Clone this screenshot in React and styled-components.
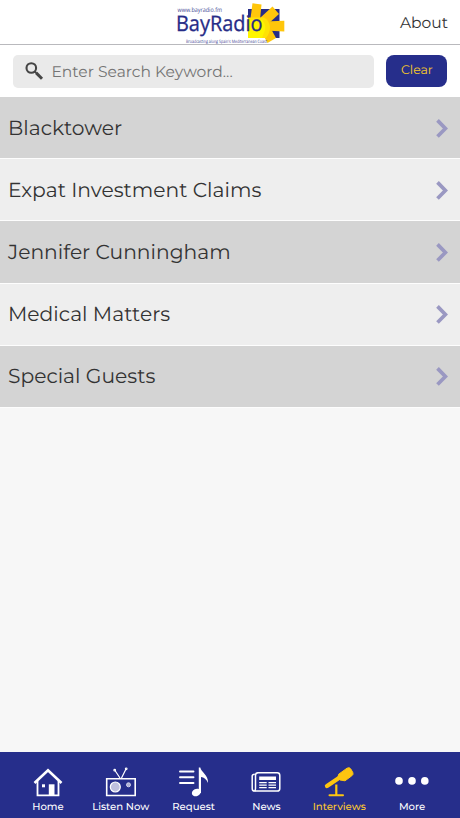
import React from 'react'
import { useState } from 'react'
import styled, { createGlobalStyle } from 'styled-components'

const interviews = [
    "Blacktower",
    "Expat Investment Claims",
    "Jennifer Cunningham",
    "Medical Matters",
    "Special Guests",
]

const tabs = [
    { name: "Home", icon: <HomeIcon/> },
    { name: "Listen Now", icon: <RadioIcon/> },
    { name: "Request", icon: <RequestIcon/> },
    { name: "News", icon: <NewsIcon/> },
    { name: "Interviews", icon: <MicIcon/> },
    { name: "More", icon: <MoreIcon/> },
]

export default function App() {

    const [activeTab,setActiveTab] = useState("Interviews")
    const [keyword,setKeyword] = useState("")

    const shown = interviews.filter((name)=>name.toLowerCase().includes(keyword.toLowerCase()))

  return (
    <>
        <GlobalStyle/>
        <Root>
            <Header>
                <Logo/>
                <About>About</About>
            </Header>
            <SearchBar>
                <SearchBox>
                    <SearchIcon/>
                    <SearchInput placeholder="Enter Search Keyword..." value={keyword} onChange={(e)=>{setKeyword(e.target.value)}}/>
                </SearchBox>
                <ClearButton onClick={()=>{setKeyword("")}}>Clear</ClearButton>
            </SearchBar>
            <List>
                {shown.map((name)=>(
                    <Row key={name}>
                        <RowName>{name}</RowName>
                        <Chevron/>
                    </Row>
                ))}
            </List>
            <TabBar>
                {tabs.map((tab)=>(
                    <Tab key={tab.name} $active={activeTab==tab.name} onClick={()=>{setActiveTab(tab.name)}}>
                        {tab.icon}
                        <span>{tab.name}</span>
                    </Tab>
                ))}
            </TabBar>
        </Root>
    </>
  )
}

function Logo() {
  return (
    <LogoSvg width="112" height="44" viewBox="175 0 112 44">
        <rect x="248" y="9" width="31.5" height="29" fill="#262c87"/>
        <path d="M252.500 3.200l9 1.300-1.500 15-9.500-1z" fill="#ffc60b"/>
        <path d="M272.500 6.500l6.500 7.500-11 10-8-6z" fill="#ffc60b"/>
        <path d="M264 21.500l20.300-.8v10.800l-20-1z" fill="#ffc60b"/>
        <path d="M270 27l6 11-8.500 5-7-13z" fill="#ffc60b"/>
        <path d="M248 17.500h16q5.500 3 6 9.500 0 6-4 11h-18z" fill="#ffe205"/>
        <path d="M248 20h14q4 4 3 10l-3 8h-14z" fill="#fff500"/>
        <text x="177.500" y="12" fontSize="6.300" textLength="44.500" lengthAdjust="spacingAndGlyphs" fill="#444a94">www.bayradio.fm</text>
        <text x="176" y="31" fontSize="21.500" fontWeight="500" textLength="86.500" lengthAdjust="spacingAndGlyphs" fill="#262c87" stroke="#262c87" strokeWidth=".3">BayRadio</text>
        <text x="186" y="43" fontSize="4.500" textLength="81" lengthAdjust="spacingAndGlyphs" fill="#3c4292">Broadcasting along Spain's Mediterranean Coast</text>
    </LogoSvg>
  )
}

function SearchIcon() {
  return (
    <svg width="19" height="19" viewBox="0 0 19 19" fill="none" stroke="#454545">
        <circle cx="6.300" cy="6" r="4.800" strokeWidth="2.100"/>
        <path d="M9.800 9.500l1.600 1.600" strokeWidth="2"/>
        <path d="M11.200 10.900l5.800 5.800" strokeWidth="3"/>
    </svg>
  )
}

function Chevron() {
  return (
    <svg width="14" height="20" viewBox="0 0 14 20" fill="none" stroke="#9a98c2" strokeWidth="3.700">
        <path d="M1.500 2.400L9.400 10.500l-7.900 8"/>
    </svg>
  )
}

function HomeIcon() {
  return (
    <svg width="36" height="34" viewBox="0 0 36 34" fill="none" stroke="#fff" strokeWidth="1.800">
        <path d="M4.500 18L18 5.300 31.500 18" strokeWidth="2.600"/>
        <path d="M7.500 16v14.300h21V16"/>
        <path d="M18.800 19.300h5.700v11h-5.700z" fill="#fff" stroke="none"/>
        <path d="M12 19.300h3v3h-3z" fill="#fff" stroke="none"/>
    </svg>
  )
}

function RadioIcon() {
  return (
    <svg width="36" height="34" viewBox="0 0 36 34" fill="none" stroke="#fff" strokeWidth="1.600">
        <path d="M3.700 13.800h28.500v16.700H3.700z"/>
        <path d="M17 13L12 5.500M18.500 13L23 4" strokeWidth="1.200"/>
        <circle cx="11.700" cy="5.200" r=".6"/>
        <circle cx="23.200" cy="3.800" r=".6"/>
        <circle cx="12.300" cy="22" r="5" fill="#bfc0df" strokeWidth="1.200"/>
        <circle cx="25.500" cy="19.800" r="2" fill="#aeb0d5" stroke="#d2d3ea" strokeWidth="1"/>
    </svg>
  )
}

function RequestIcon() {
  return (
    <svg width="36" height="34" viewBox="0 0 36 34" fill="none" stroke="#fff" strokeWidth="1.900">
        <path d="M4 6.500h13.500M4 12.200h13.500M4 18h13.500" strokeLinecap="round"/>
        <ellipse cx="20.300" cy="27.500" rx="4.600" ry="3.600" transform="rotate(-25 20.300 27.500)" fill="#fff" stroke="none"/>
        <path d="M22.800 2.500h1.500c.8 5 8.200 7 7.700 15.500-1.500-3.800-4-5.500-7-6v16h-2.200z" fill="#fff" stroke="none"/>
    </svg>
  )
}

function NewsIcon() {
  return (
    <svg width="36" height="34" viewBox="0 0 36 34" fill="none" stroke="#fff" strokeWidth="1.500">
        <path d="M9.500 7.800h19.700q2.600 0 2.600 2.600v13q0 2.600-2.600 2.600H6.600q-2.400 0-2.400-2.600V11q0-1.800 2.600-1.800"/>
        <path d="M10 7.800q-2.500 0-2.500 2.600v13q0 2-1 2.600"/>
        <path d="M11.200 11.500h16.800v3.500H11.200z" fill="#fff" stroke="none"/>
        <path d="M11.200 17.700h7.500M20.500 17.700H28M11.200 20.200h7.500M20.500 20.200H28M11.200 22.700h7.500M20.500 22.700H28" strokeWidth="1.200"/>
    </svg>
  )
}

function MicIcon() {
  return (
    <svg width="36" height="34" viewBox="0 0 36 34" fill="none" stroke="#fdc510">
        <path d="M6 21L19 12.300" strokeWidth="4.300" strokeLinecap="round"/>
        <path d="M17.700 9.200l8.300-6q2.500-1.400 3.800.8l2 3.500q.9 2-1 3.300L24 15.800l-5-.8-2-3z" fill="#fdc510" strokeWidth="1" strokeLinejoin="round"/>
        <path d="M15.300 19.500v10.500" strokeWidth="2.200"/>
        <path d="M8.500 30.300h13.500" strokeWidth="2" strokeLinecap="round"/>
    </svg>
  )
}

function MoreIcon() {
  return (
    <svg width="36" height="34" viewBox="0 0 36 34" fill="#fff">
        <circle cx="5" cy="15.900" r="3.800"/>
        <circle cx="18" cy="15.900" r="3.800"/>
        <circle cx="30.800" cy="15.900" r="3.800"/>
    </svg>
  )
}

const GlobalStyle = createGlobalStyle`
body{
    margin: 0;
    font-family: Montserrat, Inter, sans-serif;
    text-rendering: geometricPrecision;
}
*{
    box-sizing: border-box;
}
button, input{
    font-family: inherit;
    text-rendering: inherit;
    border: none;
    padding: 0;
}
`

const Root = styled.section`
height: 818px;
display: flex;
flex-direction: column;
background-color: #f7f7f7;
color: #333;
overflow: hidden;
`

const Header = styled.header`
height: 45px;
flex-shrink: 0;
display: grid;
grid-template-columns: 175px 112px 1fr;
background-color: white;
border-bottom: 1.500px solid #b9b9bd;
`

const LogoSvg = styled.svg`
grid-column: 2;
font-family: "Open Sans", "Noto Sans", sans-serif;
`

const About = styled.span`
justify-self: end;
padding: 13px 12px 0 0;
font-size: 15.500px;
line-height: 20px;
`

const SearchBar = styled.div`
height: 52px;
flex-shrink: 0;
display: flex;
gap: 12px;
padding: 9.700px 12.600px 0 13.400px;
background-color: white;
`

const SearchBox = styled.label`
flex: 1;
height: 33.300px;
display: flex;
align-items: center;
gap: 7px;
padding-left: 12.100px;
border-radius: 5px;
background-color: #eaeaea;
`

const SearchInput = styled.input`
flex: 1;
min-width: 0;
height: 33px;
font-size: 15.500px;
background-color: transparent;
outline: none;

&::placeholder{
    color: #757575;
}
`

const ClearButton = styled.button`
width: 61px;
height: 32.300px;
border-radius: 8px;
font-size: 12.500px;
background-color: #262e8b;
color: #f5c829;
`

const List = styled.div`
flex: 1;
`

const Row = styled.div`
height: 62.200px;
display: flex;
align-items: center;
justify-content: space-between;
padding: 0 10px 0 8px;
border-bottom: 1.200px solid #fdfdfd;
background-color: #eee;

&:nth-child(odd){
    background-color: #d4d4d4;
}
`

const RowName = styled.span`
padding-top: 2px;
font-size: 20.250px;
line-height: 28px;
`

const TabBar = styled.nav`
height: 66px;
flex-shrink: 0;
display: flex;
padding: 0 11.500px;
background-color: #262e8b;
`

const Tab = styled.button`
flex: 1 0 0;
display: flex;
flex-direction: column;
align-items: center;
justify-content: flex-start;
padding-top: 13px;
font-size: 10.100px;
font-weight: 500;
line-height: 15px;
white-space: nowrap;
background-color: transparent;
color: ${(props)=>props.$active?"#fdc92e":"white"};
`
